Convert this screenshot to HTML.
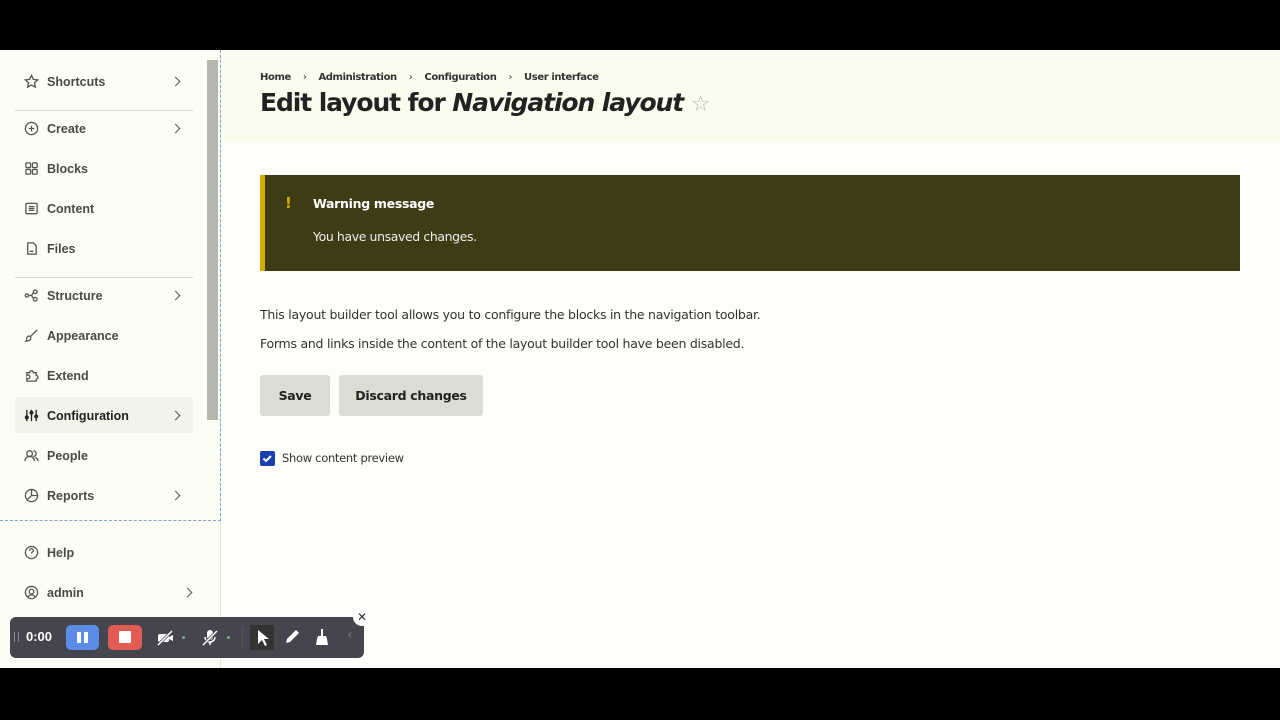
<!DOCTYPE html>
<html><head><meta charset="utf-8"><style>
*{box-sizing:border-box;margin:0;padding:0}
body{width:1280px;height:720px;background:#000;position:relative;overflow:hidden;font-family:"DejaVu Sans","Liberation Sans",sans-serif}
#page{position:absolute;left:0;top:50px;width:1280px;height:618px;background:#fdfdf9;overflow:hidden}
#side{position:absolute;left:0;top:0;width:221px;height:618px;background:#fdfdf5;border-right:1px solid #e6e6dc}
#scrollarea{position:absolute;left:0;top:0;width:221px;height:471px;border-bottom:1px dashed #7aa6c8;border-right:1px dashed #7aa6c8}
#sbar{position:absolute;left:207px;top:10px;width:11px;height:360px;background:#b6b6b0}
.it{position:absolute;left:24px;font-family:"Liberation Sans",sans-serif;font-size:12.5px;font-weight:bold;color:#4a4a48;display:flex;align-items:center}
.it svg{width:15px;height:15px;margin-right:8px;fill:none;stroke:#555;stroke-width:1.4}
.ch{position:absolute;left:172px;width:10px;height:10px}
.ch:after{content:"";position:absolute;left:0;top:1px;width:6px;height:6px;border-right:1.5px solid #555;border-top:1.5px solid #555;transform:rotate(45deg)}
.hr{position:absolute;left:15px;width:178px;border-top:1px solid #d8d8d0}
#hdr{position:absolute;left:222px;top:0;right:0;height:92px;background:#fbfbee}
.bc{position:absolute;left:260px;top:22px;font-size:10px;font-weight:bold;color:#333;letter-spacing:-0.4px}
.bc span{margin:0 12px;font-weight:normal}
h1{position:absolute;left:260px;top:38px;font-size:25px;font-weight:bold;color:#222;white-space:nowrap;letter-spacing:-1.1px}
#warn{position:absolute;left:260px;top:125px;width:980px;height:96px;background:#3d3c15;border-left:5px solid #d2ae00}
#warn .t{position:absolute;left:48px;top:21px;color:#fff;font-weight:bold;font-size:12.5px;letter-spacing:-0.3px}
#warn .m{position:absolute;left:48px;top:54px;color:#eee;font-size:12.5px;letter-spacing:-0.4px}
#warn .ex{position:absolute;left:20px;top:19px;color:#d2ae00;font-weight:bold;font-size:15px}
.p{position:absolute;left:260px;font-size:12.5px;color:#333;letter-spacing:-0.25px}
.btn{position:absolute;top:325px;height:41px;background:#dcdcd2;border-radius:3px;font-size:12.5px;font-weight:bold;color:#222;display:flex;align-items:center;justify-content:center;letter-spacing:-0.3px}
#cb{position:absolute;left:260px;top:401px;width:15px;height:15px;background:#1c3fb0;border-radius:2px}
#tb{position:absolute;left:10px;top:617px;width:354px;height:41px;background:#44454d;border-radius:6px}
#tb svg{position:absolute}
</style></head><body>
<div id="page">
<div id="side">
 <div id="scrollarea"></div>
 <div id="sbar"></div>
 <div class="it" style="top:24px"><svg viewBox="0 0 16 16"><path d="M8 1.5l2 4.3 4.6.5-3.4 3.1.9 4.6L8 11.7 3.9 14l.9-4.6L1.4 6.3 6 5.8z"/></svg>Shortcuts</div><div class="ch" style="top:27px"></div>
 <div class="hr" style="top:60px"></div>
 <div class="it" style="top:71px"><svg viewBox="0 0 16 16"><circle cx="8" cy="8" r="6.5"/><path d="M8 5v6M5 8h6"/></svg>Create</div><div class="ch" style="top:74px"></div>
 <div class="it" style="top:111px"><svg viewBox="0 0 16 16"><rect x="2" y="2" width="5" height="5" rx="1"/><rect x="9" y="2" width="5" height="5" rx="1"/><rect x="2" y="9" width="5" height="5" rx="1"/><rect x="9" y="9" width="5" height="5" rx="1"/></svg>Blocks</div>
 <div class="it" style="top:151px"><svg viewBox="0 0 16 16"><rect x="2" y="2.5" width="12" height="11" rx="1"/><path d="M5 6h6M5 8h6M5 10h6"/></svg>Content</div>
 <div class="it" style="top:191px"><svg viewBox="0 0 16 16"><path d="M4 2h6l3 3v9H4z"/><path d="M6 11h4"/></svg>Files</div>
 <div class="hr" style="top:227px"></div>
 <div class="it" style="top:238px"><svg viewBox="0 0 16 16"><circle cx="3" cy="8" r="1.7"/><circle cx="12" cy="4" r="2"/><circle cx="12" cy="12" r="2"/><path d="M5 8h3M8 8L10 5M8 8l2 3"/></svg>Structure</div><div class="ch" style="top:241px"></div>
 <div class="it" style="top:278px"><svg viewBox="0 0 16 16"><path d="M14 2L7 9M7 9c-2-1-4 0-4 2s-1 3-1 3c3 0 6-1 5-5z"/></svg>Appearance</div>
 <div class="it" style="top:318px"><svg viewBox="0 0 16 16"><path d="M3 5h3a2 2 0 114 0h3v3a2 2 0 110 4v2H3v-3a2 2 0 100-3z"/></svg>Extend</div>
 <div style="position:absolute;left:15px;top:347px;width:178px;height:36px;background:#f3f3e9"></div>
 <div class="it" style="top:358px;color:#222"><svg viewBox="0 0 16 16" style="stroke:#222"><path d="M3 2v12M8 2v12M13 2v12"/><circle cx="3" cy="10" r="1.5"/><circle cx="8" cy="5" r="1.5"/><circle cx="13" cy="9" r="1.5"/></svg>Configuration</div><div class="ch" style="top:361px"></div>
 <div class="it" style="top:398px"><svg viewBox="0 0 16 16"><circle cx="6" cy="6" r="3"/><path d="M1 14c0-3 2-5 5-5s5 2 5 5M10 3a3 3 0 010 6M12 10c2 1 3 2 3 4"/></svg>People</div>
 <div class="it" style="top:438px"><svg viewBox="0 0 16 16"><circle cx="8" cy="8" r="6.5"/><path d="M8 1.5V8h6.5M8 8l-4.5 4.5"/></svg>Reports</div><div class="ch" style="top:441px"></div>
 <div class="it" style="top:495px"><svg viewBox="0 0 16 16"><circle cx="8" cy="8" r="6.5"/><path d="M6 6a2 2 0 114 0c0 1.5-2 1.5-2 3M8 11.5v.5"/></svg>Help</div>
 <div class="it" style="top:535px"><svg viewBox="0 0 16 16"><circle cx="8" cy="8" r="6.5"/><circle cx="8" cy="7" r="2.5"/><path d="M4 13c1-2 2.5-2.5 4-2.5s3 .5 4 2.5"/></svg>admin</div><div class="ch" style="left:184px;top:538px"></div>
</div>
<div id="hdr"></div>
<div class="bc">Home<span>›</span>Administration<span>›</span>Configuration<span>›</span>User interface</div>
<h1>Edit layout for <i>Navigation layout</i> <span style="color:#bbb;font-weight:normal;font-size:22px">☆</span></h1>
<div id="warn"><div class="ex">!</div><div class="t">Warning message</div><div class="m">You have unsaved changes.</div></div>
<div class="p" style="top:257px">This layout builder tool allows you to configure the blocks in the navigation toolbar.</div>
<div class="p" style="top:286px">Forms and links inside the content of the layout builder tool have been disabled.</div>
<div class="btn" style="left:260px;width:70px">Save</div>
<div class="btn" style="left:339px;width:144px">Discard changes</div>
<div id="cb"><svg viewBox="0 0 15 15" width="15" height="15"><path d="M3.5 7.5l2.5 2.5 5-5" stroke="#fff" stroke-width="2" fill="none"/></svg></div>
<div class="p" style="left:282px;top:401px;font-size:11.5px;letter-spacing:-0.3px">Show content preview</div>
</div>
<div id="tb">
 <div style="position:absolute;left:4px;top:15px;width:5px;height:10px;border-left:1px solid #888;border-right:1px solid #888"></div>
 <div style="position:absolute;left:16px;top:12px;color:#fff;font-size:13px;font-weight:bold;font-family:'Liberation Sans',sans-serif">0:00</div>
 <div style="position:absolute;left:56px;top:8px;width:33px;height:25px;background:#5b8de8;border-radius:5px"><div style="position:absolute;left:11px;top:7px;width:4px;height:11px;background:#fff"></div><div style="position:absolute;left:18px;top:7px;width:4px;height:11px;background:#fff"></div></div>
 <div style="position:absolute;left:98px;top:8px;width:34px;height:25px;background:#e05c55;border-radius:5px"><div style="position:absolute;left:11px;top:6px;width:12px;height:12px;background:#fff;border-radius:1px"></div></div>
 <svg style="left:146px;top:12px" width="18" height="18" viewBox="0 0 18 18"><rect x="2" y="5" width="11" height="8" rx="2" fill="#fff"/><path d="M13 8l4-2v6l-4-2z" fill="#fff"/><path d="M2 16L16 2" stroke="#44454d" stroke-width="3"/><path d="M2 16L16 2" stroke="#fff" stroke-width="1.5"/></svg>
 <div style="position:absolute;left:172px;top:19px;width:3px;height:3px;background:#8a8;border-radius:50%"></div>
 <svg style="left:191px;top:12px" width="18" height="18" viewBox="0 0 18 18"><rect x="6" y="1" width="6" height="10" rx="3" fill="#fff"/><path d="M4 8a5 5 0 0010 0M9 13v3" stroke="#fff" stroke-width="1.5" fill="none"/><path d="M2 16L16 2" stroke="#44454d" stroke-width="3"/><path d="M2 16L16 2" stroke="#fff" stroke-width="1.5"/></svg>
 <div style="position:absolute;left:217px;top:19px;width:3px;height:3px;background:#8a8;border-radius:50%"></div>
 <div style="position:absolute;left:232px;top:10px;width:1px;height:21px;background:#555"></div>
 <div style="position:absolute;left:240px;top:8px;width:24px;height:25px;background:#333"></div>
 <svg style="left:246px;top:12px" width="14" height="18" viewBox="0 0 14 18"><path d="M2 1v14l4-4 3 6 2-1-3-6h5z" fill="#fff"/></svg>
 <svg style="left:273px;top:11px" width="18" height="18" viewBox="0 0 18 18"><path d="M3 15l1-4 9-9 3 3-9 9z" fill="#fff"/></svg>
 <svg style="left:304px;top:11px" width="16" height="18" viewBox="0 0 16 18"><rect x="7" y="1" width="2" height="7" fill="#fff"/><path d="M4 8h8l1 3H3z" fill="#fff"/><path d="M3 11h10l1 6H2z" fill="#fff"/></svg>
 <div style="position:absolute;left:337px;top:10px;color:#777;font-size:14px">‹</div>
</div>
<div style="position:absolute;left:353px;top:608px;width:18px;height:18px;border-radius:50%;background:#fff;color:#333;font-size:12px;text-align:center;line-height:18px">✕</div>
</body></html>
